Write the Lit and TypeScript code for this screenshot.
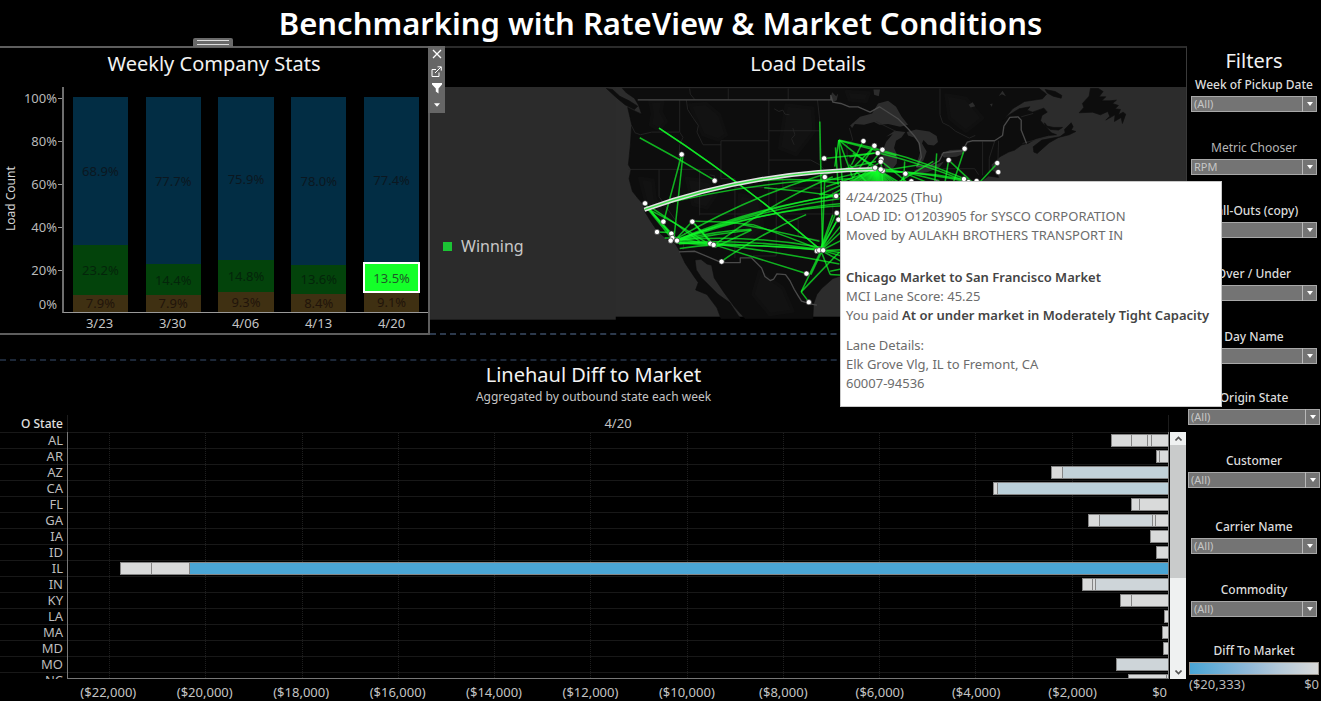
import { LitElement, html, svg, css } from "lit";
import { customElement } from "lit/decorators.js";
import { classMap } from "lit/directives/class-map.js";
import { styleMap } from "lit/directives/style-map.js";

/* ---------- Weekly company stats ---------- */

interface Week { label: string; under: number; win: number; over: number; selected?: boolean; }

const WEEKS: Week[] = [
  { label: "3/23", over: 68.9, win: 23.2, under: 7.9 },
  { label: "3/30", over: 77.7, win: 14.4, under: 7.9 },
  { label: "4/06", over: 75.9, win: 14.8, under: 9.3 },
  { label: "4/13", over: 78.0, win: 13.6, under: 8.4 },
  { label: "4/20", over: 77.4, win: 13.5, under: 9.1, selected: true },
];

@customElement("weekly-stats")
class WeeklyStats extends LitElement {
  static styles = css`
    :host { display: flex; flex-direction: column; box-sizing: border-box; position: relative;
      border: 2px solid #5e5e5e; border-left: 0; }
    h2 { margin: 0; padding-top: 3px; font-size: 20px; line-height: 26px; font-weight: 400; text-align: center; color: #f2f2f2; }
    .chart { flex: 1; display: grid; grid-template-columns: 22px 40px 1fr; min-height: 0; }
    .axis-title { writing-mode: vertical-rl; transform: rotate(180deg); text-align: center; font-size: 12px; line-height: 22px; color: #d4d4d4; padding-top: 12px; }
    .scale { display: flex; flex-direction: column; font-size: 13px; color: #b9b9b9; }
    .scale span { height: 43px; line-height: 43px; text-align: right; display: flex; justify-content: flex-end; align-items: center; gap: 1px; }
    .scale span::after { content: ""; width: 4px; height: 1px; background: #999; }
    .scale .zero { height: 24px; line-height: 24px; }
    .scale .zero::after { background: transparent; }
    .right { padding-top: 10px; }
    .plot { height: 226px; box-sizing: border-box; padding-top: 10px; border-left: 2px solid #6e6e6e; border-bottom: 1px solid #9a9a9a; display: grid; grid-template-columns: repeat(5, 1fr); }
    .col { display: flex; flex-direction: column; width: 76%; justify-self: center; }
    .seg { display: flex; align-items: center; justify-content: center; font-size: 13px; line-height: 16px; min-height: 0; box-sizing: border-box; }
    .over { background: #022d44; color: #0b1720; }
    .win { background: #03430b; color: #03250a; }
    .under { background: #3f3012; color: #21140a; }
    .selected { background: #14ff29; color: #1f5a28; outline: 2px solid #fff; outline-offset: -1px; z-index: 1; }
    .weeks { display: grid; grid-template-columns: repeat(5, 1fr); padding-left: 1px; font-size: 13px; line-height: 20px; text-align: center; color: #c4c4c4; }
    .handle { position: absolute; left: 45%; top: -10px; width: 40px; height: 9px; background: #6a6a6a; border: 0; border-radius: 2px 2px 0 0; padding: 2px 4px; box-sizing: border-box; display: flex; flex-direction: column; justify-content: space-between; }
    .handle i { height: 1px; background: #ddd; }
    .tools { position: absolute; left: 100%; top: -2px; width: 17px; height: 67px; background: #666; display: flex; flex-direction: column; align-items: center; box-sizing: border-box; }
    .tools button { all: unset; width: 16px; flex: 1; display: grid; place-items: center; cursor: pointer; }
    svg { display: block; fill: none; stroke: #fff; }
    .solid { fill: #fff; stroke: none; }
  `;
  render() {
    const seg = (kind: string, v: number, selected = false) => html`
      <div class=${classMap({ seg: true, [kind]: true, selected })} style=${styleMap({ height: `${v}%` })}>${v.toFixed(1)}%</div>`;
    return html`
      <button class="handle" aria-label="Move"><i></i><i></i></button>
      <h2>Weekly Company Stats</h2>
      <div class="chart">
        <div class="axis-title">Load Count</div>
        <div class="scale">
          ${[100, 80, 60, 40, 20].map(v => html`<span>${v}%</span>`)}<span class="zero">0%</span>
        </div>
        <div class="right">
          <div class="plot">
            ${WEEKS.map(w => html`<div class="col">${seg("over", w.over)}${seg("win", w.win, w.selected)}${seg("under", w.under)}</div>`)}
          </div>
          <div class="weeks">${WEEKS.map(w => html`<span>${w.label}</span>`)}</div>
        </div>
      </div>
      <div class="tools">
        <button aria-label="Remove"><svg width="10" height="10" viewBox="0 0 10 10"><path stroke-width="1.3" d="M1 1l8 8M9 1l-8 8"/></svg></button>
        <button aria-label="Go to sheet"><svg width="11" height="11" viewBox="0 0 11 11"><path d="M5 3.500h-4v7h7v-4M4 7L10 1M6.500 .8h3.800v3.800"/></svg></button>
        <button aria-label="Use as filter"><svg class="solid" width="12" height="12" viewBox="0 0 12 12"><path d="M1 1h10v1.500L7.500 6.500v5L4.800 9.500v-3L1 2.500z"/></svg></button>
        <button aria-label="More options"><svg class="solid" width="6" height="4" viewBox="0 0 7 4"><path d="M0 0h7L3.500 4z"/></svg></button>
      </div>`;
  }
}

/* ---------- Map ---------- */

const LAND = [
  "M8 21L20 34L44 50L56 70L66 98L52 92L24 78L30 104L36 130L32 190L26 250L34 264L28 292L38 330L54 350L70 368L76 392L92 418L112 448L140 472L166 486L178 506L196 545L222 584L236 604L228 626L262 640L292 680L304 712L362 712L330 664L296 640L262 606L246 590L230 566L226 536L244 534L262 548L276 552L284 590L312 632L344 676L376 712L580 712L582 668L592 640L606 622L640 592L670 582L1000 600L1090 320L1086 300L1108 284L1138 288L1132 274L1118 268L1116 250L1142 226L1168 212L1186 206L1208 190L1226 186L1250 172L1290 162L1312 160L1296 154L1280 136L1264 118L1268 102L1284 92L1274 80L1240 92L1224 86L1232 76L1200 82L1164 104L1152 116L1180 82L1216 60L1270 52L1282 38L1260 21Z",
  "M-40 21L-22 24L0 44L28 58L54 74L44 84L16 70L-8 50Z",
  "M1242 196L1268 176L1300 170L1322 166L1338 154L1336 144L1356 124L1362 136L1356 146L1370 150L1350 160L1318 168L1290 184L1274 198L1254 216L1244 212Z",
  "M1276 124L1284 134L1304 138L1330 138L1318 146L1294 144L1278 134Z",
  "M1278 24L1308 30L1328 42L1326 50L1302 44L1284 34Z",
  "M1414 21L1410 44L1390 66L1394 78L1380 94L1420 92L1444 100L1466 90L1472 104L1460 116L1488 100L1486 120L1506 108L1510 126L1520 98L1512 92L1498 100L1504 84L1488 82L1498 72L1480 66L1492 56L1472 58L1448 58L1460 46L1440 46L1452 30L1438 21Z",
];

const WATER = [
  "M692 132L722 106L758 96L776 66L806 58L830 76L846 104L866 130L842 136L806 128L780 130L764 122L734 130L706 128L698 140Z",
  "M794 252L788 212L800 182L820 158L800 166L826 148L858 152L846 168L830 178L824 200L834 222L832 246L818 264L800 264Z",
  "M862 152L890 144L930 150L952 164L956 182L944 192L926 190L912 176L908 186L922 210L912 238L898 250L892 246L902 214L896 182L884 168L866 162Z",
  "M884 268L912 252L950 250L974 240L960 258L926 272L896 278Z",
  "M964 218L992 206L1028 204L1034 216L1012 226L974 228Z",
  "M632 52L638 32L650 44L656 36L652 56L640 62Z",
  "M762 24L782 24L778 44L764 40Z",
  "M1048 70L1060 62L1068 74L1054 78Z",
  "M1138 44L1150 28L1160 44L1148 38Z",
  "M1112 68L1120 66L1118 76Z",
];

const NATIONAL = [
  "M54 55H635L634 42L640 62L664 66L690 76L716 76L752 92L780 76L836 112L866 142L884 162L900 186L906 228L892 256L930 254L960 238L972 214L1030 208L1044 182L1060 178H1126L1150 162L1154 134L1172 108L1196 106L1206 116L1206 146L1222 186",
  "M178 512L226 510L306 544H362V530H396L412 546L426 560L436 586L452 598L462 594L472 578L498 580L512 600L524 624L536 644L546 660L572 668L592 672",
];

const STATES = [
  "M34 130L46 154L62 160L96 152L178 152M180 56V152L190 168L180 190L176 264M26 264H304M200 56L204 84L222 112L236 132L232 152L250 190L304 190M304 178H448V400M304 178V292H346V318H448M240 264V402M240 398H660M118 264V346L196 458L190 506M448 56V178M448 148H600M448 236L574 236L600 250L612 262M448 292H490V320H640M594 56L600 110V236M470 318V524H400M490 400V414L536 414V464L560 470L600 476M640 330V400M346 318V530M690 140L700 176L682 190L684 240L700 262L692 290M210 21L212 38L226 55M326 21V55M506 21V55M962 21V100L970 124L990 134L1010 150L1050 170L1068 162M770 120L830 150M1090 180V282M1126 180L1110 230V270M1138 178L1136 240M970 262H1066L1078 280M700 262H780M1242 96L1206 106M1210 186L1232 180L1290 164",
  "M464 82L478 90L490 86L496 98L510 100M520 140L526 160L516 172L524 190M270 280L286 284L278 296",
];

const SHADE = [
  "M90 60L130 58L124 90L140 120L118 146L92 130L98 96Z", "M210 70L260 66L300 100L320 160L296 176L250 160Z",
  "M200 290L270 300L290 340L262 380L220 370Z", "M60 290L100 296L106 350L140 420L120 430L80 370Z",
  "M360 340L420 352L430 440L380 480L356 420Z", "M500 70L580 80L584 150L530 220L480 200Z",
  "M420 570L490 620L520 690L450 700L400 640Z", "M680 30L750 34L740 60L690 56Z", "M980 40L1040 50L1090 110L1040 150L990 110Z",
];

/* Load lanes: [x1, y1, x2, y2, lift] with lift as the rise of the arc. */
const LANES: number[][] = [
  [118, 140, 605, 507, 18], [118, 140, 605, 507, 18], [60, 169, 285, 297, 3], [186, 220, 132, 420, 0], [190, 218, 163, 470, 0],
  [601, 120, 609, 500, 0], [616, 288, 608, 500, 0], [434, 319, 650, 344, 3], [614, 231, 775, 214, 0],
  [100, 376, 700, 292, 26], [84, 386, 660, 306, 60],
  [170, 476, 650, 344, 24], [170, 478, 690, 334, 22], [172, 478, 660, 352, 22], [172, 480, 690, 364, 26], [168, 476, 700, 372, 30],
  [170, 472, 770, 240, 40], [180, 478, 395, 446, 3], [180, 476, 395, 444, 8], [165, 482, 605, 505, 14], [172, 484, 605, 507, 6],
  [166, 476, 604, 498, 20], [166, 470, 280, 490, 0], [170, 484, 280, 492, 0], [178, 488, 284, 484, 2], [180, 502, 290, 490, 2],
  [80, 378, 155, 470, 0], [84, 380, 165, 472, 0], [88, 384, 170, 472, 0], [78, 370, 150, 456, 0], [82, 382, 270, 490, 6], [90, 376, 240, 480, 4],
  [112, 452, 165, 454, 0], [135, 470, 180, 470, 0], [218, 420, 282, 490, 0], [222, 426, 274, 484, 0], [218, 420, 172, 470, 0], [218, 420, 400, 430, 4],
  [282, 490, 560, 577, 0], [278, 492, 605, 506, 6], [286, 498, 396, 446, 0], [282, 492, 640, 286, 20], [306, 540, 560, 400, 14],
  [288, 488, 660, 548, 4], [370, 430, 600, 480, 2], [400, 430, 600, 504, 2],
  [605, 507, 545, 632, 0], [545, 632, 660, 512, 0], [545, 632, 568, 662, 0], [574, 580, 612, 500, 0], [605, 510, 632, 580, 0], [632, 570, 672, 562, 0], [632, 580, 670, 582, 0],
  [605, 500, 650, 394, 0], [605, 500, 656, 412, 0], [608, 502, 700, 390, 0], [604, 500, 640, 400, 0], [608, 504, 700, 420, 0], [608, 506, 700, 460, 0], [608, 500, 690, 350, 0],
  [610, 506, 700, 520, 0], [610, 508, 700, 534, 0], [610, 510, 700, 560, 0], [610, 508, 700, 504, 0],
  [658, 176, 775, 270, 0], [658, 176, 700, 290, 0], [658, 176, 672, 340, 0], [658, 176, 646, 256, 0], [658, 176, 1060, 302, 16], [648, 198, 656, 310, 0],
  [660, 178, 830, 222, 0], [732, 178, 696, 250, 0], [765, 193, 700, 290, 0], [789, 204, 740, 264, 0], [775, 214, 690, 226, 0],
  [785, 240, 700, 300, 0], [785, 240, 790, 310, 0], [690, 250, 740, 300, 0], [700, 216, 780, 262, 0], [706, 254, 760, 200, 0],
  [775, 214, 1040, 300, 8], [784, 238, 860, 300, 0], [790, 268, 1060, 304, 8], [790, 262, 960, 298, 4], [790, 270, 1100, 310, 14],
  [856, 240, 852, 310, 0], [952, 216, 946, 310, 0], [988, 236, 976, 310, 0], [988, 236, 1056, 300, 0], [1036, 202, 1000, 310, 0], [1134, 246, 1080, 304, 0], [858, 276, 940, 310, 0], [858, 276, 840, 310, 0], [900, 250, 790, 268, 0], [942, 240, 830, 306, 0],
  [610, 300, 760, 264, 0], [620, 316, 770, 266, 0], [600, 340, 768, 266, 0],
];
const FAN = [620, 640, 660, 676, 690, 702, 712, 722, 732, 740, 748, 755, 762, 768, 774, 780, 786, 792, 799, 806, 815, 825, 838, 852, 870, 890, 915];

const STOPS: number[][] = [
  [186, 219], [285, 298], [76, 366], [131, 421], [218, 421], [112, 452], [155, 457], [158, 470], [172, 478], [153, 478], [272, 487], [282, 491],
  [306, 541], [561, 577], [568, 663], [592, 509], [599, 507], [611, 507], [614, 231], [616, 287], [650, 344], [652, 395], [657, 415],
  [732, 179], [765, 193], [789, 205], [775, 215], [786, 233], [784, 241], [767, 259], [790, 268], [784, 264], [858, 277], [876, 300], [988, 236], [1036, 202],
  [1134, 245], [1137, 272], [1034, 293], [1048, 302], [1072, 299], [952, 305],
];

@customElement("load-map")
class LoadMap extends LitElement {
  static styles = css`
    :host { display: flex; flex-direction: column; box-sizing: border-box; position: relative; border-top: 2px solid #2b2b2b; border-right: 1px solid #3a3a3a; border-bottom: 2px dashed #2c394c; }
    h2 { margin: 0; padding-top: 3px; padding-bottom: 10px; font-size: 20px; line-height: 26px; font-weight: 400; text-align: center; color: #f2f2f2; }
    .canvas { position: relative; }
    svg { display: block; width: 100%; height: auto; }
    .legend { position: absolute; left: 13px; top: 50%; margin-top: 32px; display: flex; align-items: center; gap: 9px; font-size: 16px; line-height: 22px; color: #c8c8c8; }
    .legend i { width: 9px; height: 9px; background: #1bc434; }
    .tip { position: absolute; left: 410px; top: 133px; z-index: 5; width: 382px; box-sizing: border-box; padding: 6px 5px 13px; background: #fff; border: 1px solid #c9c9c9; font-size: 13px; line-height: 19px; color: #6c6c6c; white-space: nowrap; }
    .tip p { margin: 0; }
    .tip .lane { margin-top: 23px; }
    .tip .details { margin-top: 11px; }
    .tip b { font-weight: 600; color: #444; }
  `;
  render() {
    const arc = ([a, b, c, d, lift]: number[]) => `M${a} ${b}Q${(a + c) / 2} ${(b + d) / 2 - lift * 1.4} ${c} ${d}`;
    return html`
      <h2>Load Details</h2>
      <div class="canvas">
        <svg viewBox="-570 21 2271 699" role="img" aria-label="Load lanes across the United States">
          <rect x="-570" y="21" width="558" height="699" fill="#2b2b2b"/>
          <rect x="-14" y="21" width="1715" height="690" fill="#2c2c2c"/>
          <svg x="-570" y="21" width="2271" height="690" viewBox="-570 21 2271 690">
            ${LAND.map(d => svg`<path d=${d} fill="#0d0d0d" stroke="#0d0d0d" stroke-width="2" stroke-linejoin="round"/>`)}
            ${SHADE.map(d => svg`<path d=${d} fill="#121212" stroke="#101010" stroke-width="10" stroke-linejoin="round"/>`)}
            ${WATER.map(d => svg`<path d=${d} fill="#2c2c2c"/>`)}
            ${STATES.map(d => svg`<path d=${d} fill="none" stroke="#272727" stroke-width="2.5"/>`)}
            ${NATIONAL.map(d => svg`<path d=${d} fill="none" stroke="#4a4a4a" stroke-width="4" stroke-linejoin="round"/>`)}
            <g fill="none" stroke="#12ff2a" stroke-width="4.6" stroke-opacity=".68">
              ${LANES.map(l => svg`<path d=${arc(l)}/>`)}
              ${FAN.map(x => svg`<path d="M772 262L${x} 350"/>`)}
            </g>
            <g fill="none">
              <path d="M74 385Q400 268 770 263" stroke="#e2e2e2" stroke-width="13"/>
              <path d="M74 385Q400 268 770 263" stroke="#3fe04c" stroke-width="4"/>
            </g>
            <g fill="#fff" stroke="#222" stroke-width="2">
              ${STOPS.map(([x, y]) => svg`<circle cx=${x} cy=${y} r="8"/>`)}
            </g>
          </svg>
        </svg>
        <div class="legend"><i></i>Winning</div>
      </div>
      <div class="tip" role="tooltip">
        <p>4/24/2025 (Thu)</p>
        <p>LOAD ID: O1203905 for SYSCO CORPORATION</p>
        <p>Moved by AULAKH BROTHERS TRANSPORT IN</p>
        <p class="lane"><b>Chicago Market to San Francisco Market</b></p>
        <p>MCI Lane Score: 45.25</p>
        <p>You paid <b>At or under market in Moderately Tight Capacity</b></p>
        <p class="details">Lane Details:</p>
        <p>Elk Grove Vlg, IL to Fremont, CA</p>
        <p>60007-94536</p>
      </div>`;
  }
}

/* ---------- Linehaul diff ---------- */

const SPAN = 22857;
/* Segments are listed from the outermost one towards $0. */
const STATES_DIFF: { state: string; segs: [number, string][] }[] = [
  { state: "AL", segs: [[420, "g"], [320, "g"], [100, "g"], [345, "g"]] },
  { state: "AR", segs: [[80, "g"], [180, "g"]] },
  { state: "AZ", segs: [[235, "g"], [2195, "b"]] },
  { state: "CA", segs: [[70, "g"], [3560, "c"]] },
  { state: "FL", segs: [[165, "g"], [605, "g"]] },
  { state: "GA", segs: [[220, "g"], [1110, "d"], [60, "g"], [265, "g"]] },
  { state: "IA", segs: [[375, "g"]] },
  { state: "ID", segs: [[260, "g"]] },
  { state: "IL", segs: [[630, "g"], [805, "g"], [20333, "x"]] },
  { state: "IN", segs: [[200, "g"], [70, "g"], [1515, "d"]] },
  { state: "KY", segs: [[230, "g"], [760, "g"]] },
  { state: "LA", segs: [[77, "g"]] },
  { state: "MA", segs: [[125, "g"]] },
  { state: "MD", segs: [[98, "g"]] },
  { state: "MO", segs: [[1073, "d"]] },
  { state: "NC", segs: [[775, "g"], [50, "g"]] },
];
const TICKS = [22000, 20000, 18000, 16000, 14000, 12000, 10000, 8000, 6000, 4000, 2000];

@customElement("linehaul-diff")
class LinehaulDiff extends LitElement {
  static styles = css`
    :host { display: flex; flex-direction: column; min-height: 0; border-top: 2px dashed #1c2737; padding-top: 1px; }
    h2 { margin: 0; font-size: 20px; line-height: 26px; font-weight: 400; text-align: center; color: #f2f2f2; }
    .sub { margin: 0; font-size: 12px; line-height: 17px; text-align: center; color: #c4c4c4; }
    .head { margin-top: 10px; display: grid; grid-template-columns: 67px 1fr 18px; font-size: 13px; line-height: 17px; color: #c4c4c4; }
    .head b { font-weight: 500; color: #e0e0e0; text-align: right; padding-right: 4px; font-size: 12px; }
    .head span { text-align: center; border-left: 1px solid #1c1c1c; border-right: 1px solid #1c1c1c; }
    .body { flex: 1; min-height: 0; display: grid; grid-template-columns: 67px 1fr 18px; }
    .names, .bars { overflow: hidden; }
    .names div { height: 16px; box-sizing: border-box; border-top: 1px solid #181818; font-size: 13px; line-height: 14px; text-align: right; padding-right: 4px; color: #bdbdbd; }
    .bars { position: relative; border-left: 1px solid #777; border-right: 1px solid #777; border-bottom: 1px solid #777; }
    .grid { position: absolute; top: 0; bottom: 0; border-left: 1px dotted #1e1e1e; }
    .row { position: relative; height: 16px; box-sizing: border-box; border-top: 1px solid #181818; padding-top: 1px; display: flex; justify-content: flex-end; }
    .seg { height: 13px; box-sizing: border-box; border: 1px solid #858585; border-right-width: 0; }
    .seg.g { background: #d9dada; }
    .seg.d { background: #ced5d9; }
    .seg.b { background: #c2d1d8; }
    .seg.c { background: #bbd0da; }
    .seg.x { background: #4aa5d5; }
    .scroll { width: 16px; margin-left: 1px; background: #eff1f1; display: flex; flex-direction: column; justify-content: space-between; }
    .scroll button { all: unset; height: 13px; display: grid; place-items: center; }
    .scroll .thumb { height: 54%; background: #c9cbcb; }
    .scroll .rest { flex: 1; }
    .axis { display: flex; position: relative; height: 22px; margin: 0 18px 0 67px; font-size: 13px; line-height: 26px; color: #c4c4c4; }
    .axis span { position: absolute; transform: translateX(-50%); }
    .axis .end { transform: none; right: 2px; }
  `;
  render() {
    const pos = (v: number) => styleMap({ left: `${(100 * (SPAN - v)) / SPAN}%` });
    return html`
      <h2>Linehaul Diff to Market</h2>
      <p class="sub">Aggregated by outbound state each week</p>
      <div class="head"><b>O State</b><span>4/20</span></div>
      <div class="body">
        <div class="names">${STATES_DIFF.map(s => html`<div>${s.state}</div>`)}</div>
        <div class="bars">
          ${TICKS.map(t => html`<div class="grid" style=${pos(t)}></div>`)}
          ${STATES_DIFF.map(s => html`<div class="row">${s.segs.map(([v, k]) => html`<div class=${`seg ${k}`} style=${styleMap({ width: `${(100 * v) / SPAN}%` })}></div>`)}</div>`)}
        </div>
        <div class="scroll">
          <button aria-label="Scroll up"><svg width="7" height="5" viewBox="0 0 7 5"><path d="M.5 4.500l3-3 3 3" fill="none" stroke="#555" stroke-width="1.600"/></svg></button>
          <div class="thumb"></div><div class="rest"></div>
          <button aria-label="Scroll down"><svg width="7" height="5" viewBox="0 0 7 5"><path d="M.5.500l3 3 3-3" fill="none" stroke="#555" stroke-width="1.600"/></svg></button>
        </div>
      </div>
      <div class="axis">
        ${TICKS.map(t => html`<span style=${pos(t)}>($${t.toLocaleString("en-US")})</span>`)}
        <span class="end">$0</span>
      </div>`;
  }
}

/* ---------- Filters ---------- */

interface Filter { name: string; value: string; light?: boolean; }
const FILTER_GROUPS: { wide: boolean; items: Filter[] }[] = [
  { wide: false, items: [
    { name: "Week of Pickup Date", value: "(All)" }, { name: "Metric Chooser", value: "RPM", light: true },
    { name: "Fall-Outs (copy)", value: "(All)" }, { name: "Over / Under", value: "(All)" }, { name: "Day Name", value: "(All)" } ] },
  { wide: true, items: [{ name: "Origin State", value: "(All)" }, { name: "Customer", value: "(All)" }] },
  { wide: false, items: [{ name: "Carrier Name", value: "(All)" }, { name: "Commodity", value: "(All)" }] },
];

@customElement("filter-panel")
class FilterPanel extends LitElement {
  static styles = css`
    :host { display: flex; flex-direction: column; gap: 23px; }
    h2 { margin: 0 0 -23px; padding-top: 1px; font-size: 20px; line-height: 27px; font-weight: 400; text-align: center; color: #f2f2f2; }
    .group { display: flex; flex-direction: column; gap: 25px; padding: 0 4px; }
    .group.wide { padding: 0 1px; margin-bottom: 5px; }
    .filter { display: flex; flex-direction: column; }
    label, .label { font-size: 12px; line-height: 22px; font-weight: 500; text-align: center; color: #dcdcdc; white-space: nowrap; }
    label.light { font-weight: 400; color: #b5b5b5; }
    .box { position: relative; display: grid; }
    select { appearance: none; height: 16px; box-sizing: border-box; margin: 0; padding: 0 16px 0 2px; border: 1px solid #a8a8a8; border-radius: 0; background: #747474; color: #c6c6c6; font: 11px/14px "Noto Sans", sans-serif; }
    .arrow { position: absolute; right: 0; top: 0; width: 14px; height: 16px; border-left: 1px solid #b8b8b8; display: grid; place-items: center; pointer-events: none; }
    .ramp { height: 13px; box-sizing: border-box; border: 1px solid #9b968f; background: linear-gradient(90deg, #49a5d5, #8fb8d8 45%, #b4c9d9 70%, #d8d9d9); }
    .ends { display: flex; justify-content: space-between; font-size: 13px; line-height: 18px; color: #bcbcbc; }
    .diff { padding: 0 2px; display: flex; flex-direction: column; }
  `;
  render() {
    return html`
      <h2>Filters</h2>
      ${FILTER_GROUPS.map((g, gi) => html`<div class=${classMap({ group: true, wide: g.wide })}>
        ${g.items.map((f, i) => html`<div class="filter">
          <label class=${classMap({ light: !!f.light })} for=${`f${gi}-${i}`}>${f.name}</label>
          <div class="box"><select id=${`f${gi}-${i}`}><option>${f.value}</option></select>
            <span class="arrow"><svg width="6" height="4" viewBox="0 0 6 4"><path d="M0 0h6L3 4z" fill="#fff"/></svg></span></div>
        </div>`)}
      </div>`)}
      <div class="diff"><span class="label">Diff To Market</span><div class="ramp"></div>
        <div class="ends"><span>($20,333)</span><span>$0</span></div></div>`;
  }
}

@customElement("app-root")
class AppRoot extends LitElement {
  static styles = css`
    :host { display: flex; flex-direction: column; height: 100vh; min-height: 560px; overflow: hidden; background: #000; color: #fff; font-family: "Noto Sans", sans-serif; }
    h1 { margin: 0; font-size: 31px; line-height: 46px; font-weight: 600; text-align: center; }
    .page { flex: 1; min-height: 0; display: grid; grid-template-columns: 1fr 134px; }
    .sheets { min-height: 0; min-width: 0; display: flex; flex-direction: column; gap: 24px; }
    .top { display: grid; grid-template-columns: 430fr 757fr; min-height: 288px; }
    weekly-stats { z-index: 2; }
    load-map { z-index: 1; }
    linehaul-diff { flex: 1; }
  `;
  render() {
    return html`
      <h1>Benchmarking with RateView &amp; Market Conditions</h1>
      <div class="page">
        <main class="sheets">
          <div class="top"><weekly-stats></weekly-stats><load-map></load-map></div>
          <linehaul-diff></linehaul-diff>
        </main>
        <filter-panel></filter-panel>
      </div>`;
  }
}
